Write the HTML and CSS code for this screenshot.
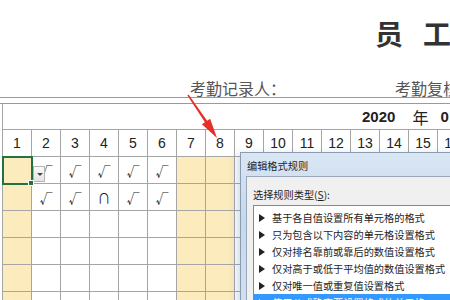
FILE: index.html
```html
<!DOCTYPE html>
<html lang="zh-CN">

<head>
    <meta charset="UTF-8">
    <meta name="viewport" content="width=device-width, initial-scale=1.0">
    <title>员工考勤表</title>
    <link rel="stylesheet" href="styles.css">
</head>

<body>
    <div class="sheet">
        <div class="title"><span>员</span><span>工</span></div>
        <div class="signers">
            <span class="signer">考勤记录人：</span>
            <span class="signer">考勤复核</span>
        </div>
        <div class="grid">
            <div class="year-row">
                <b>2020</b><span class="nian">年</span><span class="month">0</span>
            </div>
            <div class="row head">
                <div class="cell">1</div><div class="cell">2</div><div class="cell">3</div><div class="cell">4</div>
                <div class="cell">5</div><div class="cell">6</div><div class="cell">7</div><div class="cell">8</div>
                <div class="cell">9</div><div class="cell">10</div><div class="cell">11</div><div class="cell">12</div>
                <div class="cell">13</div><div class="cell">14</div><div class="cell">15</div><div class="cell">16</div>
            </div>
            <div class="row">
                <div class="cell off sel"><span class="drop"></span></div>
                <div class="cell mark">√</div><div class="cell mark">√</div><div class="cell mark">√</div>
                <div class="cell mark">√</div><div class="cell mark">√</div><div class="cell off"></div><div class="cell off"></div>
                <div class="cell"></div><div class="cell"></div><div class="cell"></div><div class="cell"></div>
                <div class="cell"></div><div class="cell off"></div><div class="cell off"></div><div class="cell"></div>
            </div>
            <div class="row">
                <div class="cell off"></div>
                <div class="cell mark">√</div><div class="cell mark">√</div><div class="cell mark">∩</div>
                <div class="cell mark">√</div><div class="cell mark">√</div><div class="cell off"></div><div class="cell off"></div>
                <div class="cell"></div><div class="cell"></div><div class="cell"></div><div class="cell"></div>
                <div class="cell"></div><div class="cell off"></div><div class="cell off"></div><div class="cell"></div>
            </div>
            <div class="row">
                <div class="cell off"></div><div class="cell"></div><div class="cell"></div><div class="cell"></div>
                <div class="cell"></div><div class="cell"></div><div class="cell off"></div><div class="cell off"></div>
                <div class="cell"></div><div class="cell"></div><div class="cell"></div><div class="cell"></div>
                <div class="cell"></div><div class="cell off"></div><div class="cell off"></div><div class="cell"></div>
            </div>
            <div class="row">
                <div class="cell off"></div><div class="cell"></div><div class="cell"></div><div class="cell"></div>
                <div class="cell"></div><div class="cell"></div><div class="cell off"></div><div class="cell off"></div>
                <div class="cell"></div><div class="cell"></div><div class="cell"></div><div class="cell"></div>
                <div class="cell"></div><div class="cell off"></div><div class="cell off"></div><div class="cell"></div>
            </div>
            <div class="row">
                <div class="cell off"></div><div class="cell"></div><div class="cell"></div><div class="cell"></div>
                <div class="cell"></div><div class="cell"></div><div class="cell off"></div><div class="cell off"></div>
                <div class="cell"></div><div class="cell"></div><div class="cell"></div><div class="cell"></div>
                <div class="cell"></div><div class="cell off"></div><div class="cell off"></div><div class="cell"></div>
            </div>
            <div class="row">
                <div class="cell off"></div><div class="cell"></div><div class="cell"></div><div class="cell"></div>
                <div class="cell"></div><div class="cell"></div><div class="cell off"></div><div class="cell off"></div>
                <div class="cell"></div><div class="cell"></div><div class="cell"></div><div class="cell"></div>
                <div class="cell"></div><div class="cell off"></div><div class="cell off"></div><div class="cell"></div>
            </div>
        </div>
    </div>

    <svg class="arrow" width="450" height="300" viewBox="0 0 450 300">
        <polygon points="187.4,95.4 188.6,94.6 207.1,120.8 210.1,118.7 217,138 201.9,124.3 204.9,122.2" fill="#e5302a" />
    </svg>

    <div class="dialog">
        <div class="dialog-title">编辑格式规则</div>
        <div class="panel">
            <div class="label">选择规则类型(<u>S</u>):</div>
            <ul class="rules">
                <li><i></i>基于各自值设置所有单元格的格式</li>
                <li><i></i>只为包含以下内容的单元格设置格式</li>
                <li><i></i>仅对排名靠前或靠后的数值设置格式</li>
                <li><i></i>仅对高于或低于平均值的数值设置格式</li>
                <li><i></i>仅对唯一值或重复值设置格式</li>
                <li class="active"><i></i>使用公式确定要设置格式的单元格</li>
            </ul>
        </div>
    </div>
</body>

</html>
```

FILE: styles.css
```css
body {
    margin: 0;
    width: 450px;
    height: 300px;
    overflow: hidden;
    position: relative;
    background: #fff;
    font-family: "Liberation Sans", "Noto Sans CJK SC", sans-serif;
    color: #222;
}

.title {
    display: flex;
    gap: 20px;
    height: 66px;
    align-items: center;
    padding-left: 375px;
    font-family: "Noto Sans CJK SC", sans-serif;
    font-size: 28px;
    font-weight: bold;
    color: #333;
    white-space: nowrap;
}

.signers {
    display: flex;
    height: 32px;
    box-sizing: border-box;
    padding: 12px 0 0 190px;
    border-bottom: 1px solid #9a9a9a;
    font-family: "Noto Sans CJK SC", sans-serif;
    font-size: 16px;
    line-height: 20px;
    color: #555;
    white-space: nowrap;
}

.signer {
    flex: none;
    width: 205px;
}

.grid {
    margin-top: 5px;
    border-top: 1px solid #9a9a9a;
}

.year-row {
    display: flex;
    align-items: center;
    height: 25px;
    margin-left: 2px;
    padding-left: 359px;
    border-left: 1px solid #a5a5a5;
    border-bottom: 1px solid #a5a5a5;
    font-size: 15px;
    white-space: nowrap;
}

.year-row .nian {
    margin-left: 17px;
    font-family: "Noto Sans CJK SC", sans-serif;
    font-size: 16px;
}

.year-row .month {
    margin-left: 12px;
    font-weight: bold;
}

.row {
    display: grid;
    grid-template-columns: repeat(16, 29px);
    height: 27px;
    margin-left: 2px;
    border-left: 1px solid #a5a5a5;
}

.cell {
    position: relative;
    box-sizing: border-box;
    border-right: 1px solid #a5a5a5;
    border-bottom: 1px solid #a5a5a5;
    display: flex;
    align-items: center;
    justify-content: center;
    font-size: 14px;
}

.row:first-of-type .cell,
.head .cell {
    background: #fff;
}

.cell.off {
    background: #fcebbd;
}

.cell.mark {
    font-family: "Noto Sans CJK SC", sans-serif;
    font-size: 13px;
}

.cell.sel {
    outline: 2px solid #217346;
    outline-offset: -1px;
    z-index: 1;
}

.cell.sel::after {
    content: "";
    position: absolute;
    right: -3px;
    bottom: -3px;
    width: 4px;
    height: 4px;
    background: #217346;
    border: 1px solid #fff;
}

.drop {
    position: absolute;
    left: 30px;
    top: 9px;
    width: 12px;
    height: 16px;
    box-sizing: border-box;
    border: 1px solid #b4b4b4;
    background: linear-gradient(#fafafa, #e4e4e4);
}

.drop::after {
    content: "";
    position: absolute;
    left: 3px;
    top: 6px;
    border-left: 3px solid transparent;
    border-right: 3px solid transparent;
    border-top: 3px solid #444;
}

.arrow {
    position: absolute;
    left: 0;
    top: 0;
    pointer-events: none;
}

.dialog {
    position: absolute;
    left: 240px;
    top: 152px;
    width: 230px;
    height: 170px;
    box-sizing: border-box;
    border: 1px solid #8a9bb2;
    background: linear-gradient(#d9e6f4, #c6d8ec 40%, #d4e2f1);
    font-family: "Noto Sans CJK SC", sans-serif;
    font-size: 10.2px;
    color: #1e1e1e;
    box-shadow: -3px 2px 8px rgba(80, 120, 170, 0.25);
}

.dialog-title {
    height: 23px;
    line-height: 25px;
    padding-left: 6px;
}

.panel {
    margin-left: 5px;
    height: 160px;
    box-sizing: border-box;
    padding: 11px 0 0 6px;
    border: 1px solid #9aa8ba;
    background: #f0f0f0;
}

.label {
    line-height: 14px;
    white-space: nowrap;
}

.rules {
    list-style: none;
    margin: 3px 0 0;
    padding: 3px 0 0;
    border: 1px solid #828790;
    background: #fff;
    white-space: nowrap;
}

.rules li {
    display: flex;
    align-items: center;
    gap: 7px;
    height: 17px;
    padding-left: 5px;
}

.rules li i {
    flex: none;
    border-left: 6px solid #222;
    border-top: 4px solid transparent;
    border-bottom: 4px solid transparent;
}

.rules li.active {
    background: #3399ff;
    color: #fff;
}

.rules li.active i {
    border-left-color: #fff;
}
```
